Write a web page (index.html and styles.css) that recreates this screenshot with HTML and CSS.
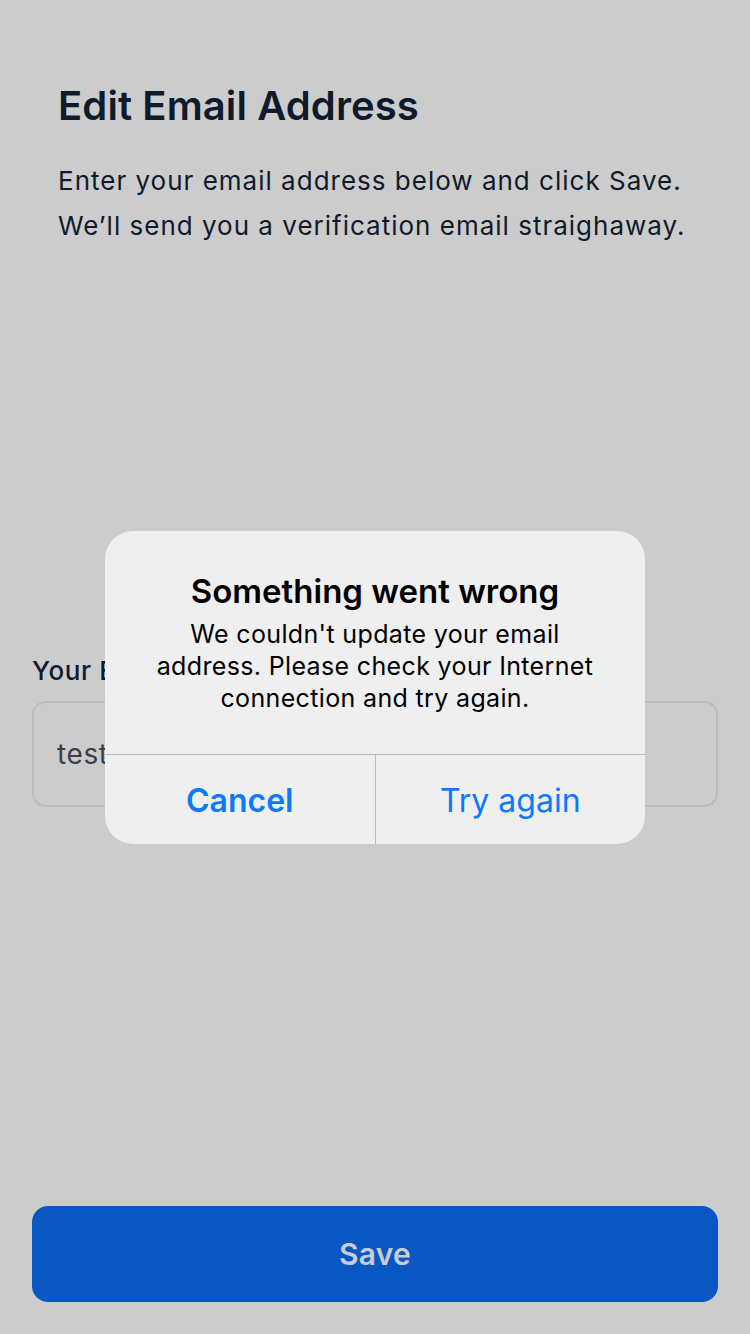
FILE: index.html
```html
<!DOCTYPE html>
<html>
<head>
<meta charset="utf-8">
<link rel="stylesheet" href="styles.css">
</head>
<body>
<div class="screen">
  <div class="content">
    <h1 class="title">Edit Email Address</h1>
    <p class="desc">Enter your email address below and click Save. We’ll send you a verification email straighaway.</p>
    <div class="field">
      <label class="label">Your Email Address</label>
      <div class="input">test@example.com</div>
    </div>
  </div>
  <div class="footer">
    <button class="save">Save</button>
  </div>
  <div class="alert">
    <div class="alert-body">
      <div class="alert-title">Something went wrong</div>
      <div class="alert-msg">We couldn't update your email<br>address. Please check your Internet<br>connection and try again.</div>
    </div>
    <div class="alert-actions">
      <div class="action bold">Cancel</div>
      <div class="action">Try again</div>
    </div>
  </div>
</div>
</body>
</html>
```
FILE: styles.css
```css
* { box-sizing: border-box; }
html, body { margin: 0; padding: 0; }
body {
  background: #cccccc;
  font-family: Inter, "Noto Sans", sans-serif;
  width: 750px;
  height: 1334px;
  overflow: hidden;
}
.screen {
  position: relative;
  width: 750px;
  height: 1334px;
  display: flex;
  flex-direction: column;
}
.content {
  flex: 1;
  padding: 0 32px;
  display: flex;
  flex-direction: column;
}
.title {
  margin: 82px 0 0 26px;
  font-size: 40px;
  line-height: 48px;
  font-weight: 600;
  color: #0f1a2d;
  letter-spacing: 0.1px;
}
.desc {
  margin: 28px 0 0 26px;
  font-size: 26px;
  line-height: 45px;
  color: #0f1a2d;
  letter-spacing: 1px;
  width: 660px;
}
.field {
  margin-top: 407px;
  display: flex;
  flex-direction: column;
}
.label {
  font-size: 26px;
  line-height: 32px;
  font-weight: 500;
  color: #0f1a2d;
  letter-spacing: 0.6px;
}
.input {
  margin-top: 14px;
  height: 106px;
  border: 2px solid #b8bbc2;
  border-radius: 14px;
  padding: 0 23px;
  display: flex;
  align-items: center;
  font-size: 28px;
  color: #3a3f4b;
  letter-spacing: 0.6px;
}
.footer {
  padding: 0 32px 32px;
}
.save {
  width: 100%;
  height: 96px;
  border: none;
  border-radius: 16px;
  background: #0a57c4;
  color: #c8ccd3;
  font-family: Inter, "Noto Sans", sans-serif;
  font-size: 30px;
  font-weight: 600;
  letter-spacing: 0.3px;
}
.alert {
  position: absolute;
  left: 105px;
  top: 531px;
  width: 540px;
  height: 313px;
  background: #efefef;
  border-radius: 28px;
  display: flex;
  flex-direction: column;
  overflow: hidden;
}
.alert-body {
  height: 224px;
  padding: 40px 16px 0;
  text-align: center;
  border-bottom: 1.5px solid #b9b9bc;
}
.alert-title {
  font-size: 33px;
  line-height: 40px;
  font-weight: 600;
  color: #000;
}
.alert-msg {
  margin-top: 7px;
  font-size: 25px;
  line-height: 32px;
  color: #000;
  letter-spacing: 0.35px;
}
.alert-actions {
  flex: 1;
  display: flex;
}
.action {
  flex: 1;
  display: flex;
  align-items: center;
  justify-content: center;
  font-size: 32px;
  color: #0a7aff;
  padding-top: 2px;
}
.action + .action { border-left: 1.5px solid #b9b9bc; }
.action.bold { font-weight: 600; }
```
